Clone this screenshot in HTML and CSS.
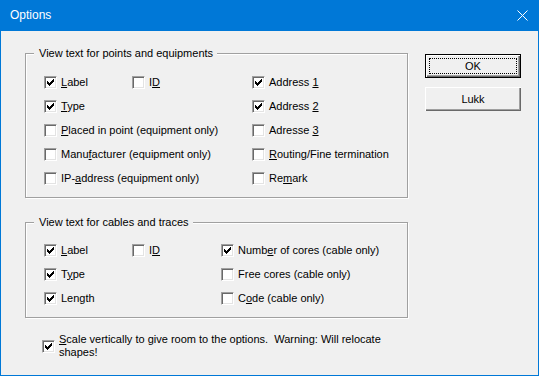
FILE: index.html
```html
<!DOCTYPE html>
<html>
<head>
<meta charset="utf-8">
<link rel="stylesheet" href="styles.css">
</head>
<body>
<div class="window">
  <div class="titlebar">
    <span class="title">Options</span>
    <svg class="close" width="11" height="11" viewBox="0 0 11 11"><path d="M0.5 0.5L10.5 10.5M10.5 0.5L0.5 10.5" stroke="#fff" stroke-width="1" fill="none"/></svg>
  </div>
  <div class="client">
    <div class="main">
      <div class="group g1">
        <span class="legend">View text for points and equipments</span>
        <div class="grid grid1">
          <label class="cb"><span class="box on"><svg viewBox="0 0 13 13" width="13" height="13"><path d="M3 5h1v3h-1zM4 6h1v3h-1zM5 7h1v3h-1zM6 6h1v3h-1zM7 5h1v3h-1zM8 4h1v3h-1zM9 3h1v3h-1z" fill="#000"/></svg></span><span class="txt"><u>L</u>abel</span></label>
          <label class="cb"><span class="box"></span><span class="txt">I<u>D</u></span></label>
          <label class="cb"><span class="box on"><svg viewBox="0 0 13 13" width="13" height="13"><path d="M3 5h1v3h-1zM4 6h1v3h-1zM5 7h1v3h-1zM6 6h1v3h-1zM7 5h1v3h-1zM8 4h1v3h-1zM9 3h1v3h-1z" fill="#000"/></svg></span><span class="txt">Address <u>1</u></span></label>

          <label class="cb"><span class="box on"><svg viewBox="0 0 13 13" width="13" height="13"><path d="M3 5h1v3h-1zM4 6h1v3h-1zM5 7h1v3h-1zM6 6h1v3h-1zM7 5h1v3h-1zM8 4h1v3h-1zM9 3h1v3h-1z" fill="#000"/></svg></span><span class="txt"><u>T</u>ype</span></label>
          <div></div>
          <label class="cb"><span class="box on"><svg viewBox="0 0 13 13" width="13" height="13"><path d="M3 5h1v3h-1zM4 6h1v3h-1zM5 7h1v3h-1zM6 6h1v3h-1zM7 5h1v3h-1zM8 4h1v3h-1zM9 3h1v3h-1z" fill="#000"/></svg></span><span class="txt">Address <u>2</u></span></label>

          <label class="cb span2"><span class="box"></span><span class="txt"><u>P</u>laced in point (equipment only)</span></label>
          <label class="cb"><span class="box"></span><span class="txt">Adresse <u>3</u></span></label>

          <label class="cb span2"><span class="box"></span><span class="txt">Manu<u>f</u>acturer (equipment only)</span></label>
          <label class="cb"><span class="box"></span><span class="txt"><u>R</u>outing/Fine termination</span></label>

          <label class="cb span2"><span class="box"></span><span class="txt">IP-<u>a</u>ddress (equipment only)</span></label>
          <label class="cb"><span class="box"></span><span class="txt">Re<u>m</u>ark</span></label>
        </div>
      </div>

      <div class="group g2">
        <span class="legend">View text for cables and traces</span>
        <div class="grid grid2">
          <label class="cb"><span class="box on"><svg viewBox="0 0 13 13" width="13" height="13"><path d="M3 5h1v3h-1zM4 6h1v3h-1zM5 7h1v3h-1zM6 6h1v3h-1zM7 5h1v3h-1zM8 4h1v3h-1zM9 3h1v3h-1z" fill="#000"/></svg></span><span class="txt"><u>L</u>abel</span></label>
          <label class="cb"><span class="box"></span><span class="txt">I<u>D</u></span></label>
          <label class="cb"><span class="box on"><svg viewBox="0 0 13 13" width="13" height="13"><path d="M3 5h1v3h-1zM4 6h1v3h-1zM5 7h1v3h-1zM6 6h1v3h-1zM7 5h1v3h-1zM8 4h1v3h-1zM9 3h1v3h-1z" fill="#000"/></svg></span><span class="txt">Numb<u>e</u>r of cores (cable only)</span></label>

          <label class="cb"><span class="box on"><svg viewBox="0 0 13 13" width="13" height="13"><path d="M3 5h1v3h-1zM4 6h1v3h-1zM5 7h1v3h-1zM6 6h1v3h-1zM7 5h1v3h-1zM8 4h1v3h-1zM9 3h1v3h-1z" fill="#000"/></svg></span><span class="txt">T<u>y</u>pe</span></label>
          <div></div>
          <label class="cb"><span class="box"></span><span class="txt">Free cores (cable only)</span></label>

          <label class="cb"><span class="box on"><svg viewBox="0 0 13 13" width="13" height="13"><path d="M3 5h1v3h-1zM4 6h1v3h-1zM5 7h1v3h-1zM6 6h1v3h-1zM7 5h1v3h-1zM8 4h1v3h-1zM9 3h1v3h-1z" fill="#000"/></svg></span><span class="txt">Len<u>g</u>th</span></label>
          <div></div>
          <label class="cb"><span class="box"></span><span class="txt">C<u>o</u>de (cable only)</span></label>
        </div>
      </div>

      <label class="cb scale"><span class="box on"><svg viewBox="0 0 13 13" width="13" height="13"><path d="M3 5h1v3h-1zM4 6h1v3h-1zM5 7h1v3h-1zM6 6h1v3h-1zM7 5h1v3h-1zM8 4h1v3h-1zM9 3h1v3h-1z" fill="#000"/></svg></span><span class="txt"><u>S</u>cale vertically to give room to the options.&nbsp; Warning: Will relocate<br>shapes!</span></label>
    </div>

    <div class="buttons">
      <div class="btn default"><span class="focus">OK</span></div>
      <div class="btn">Lukk</div>
    </div>
  </div>
</div>
</body>
</html>
```

FILE: styles.css
```css
* { box-sizing: border-box; }

html, body {
  margin: 0;
  padding: 0;
  background: #f0f0f0;
}

.window {
  width: 539px;
  height: 376px;
  background: #0078d7;
  padding: 0 1px 1px 1px;
  display: flex;
  flex-direction: column;
  font-family: "Liberation Sans", Arial, sans-serif;
  font-size: 11px;
  color: #000;
}

.titlebar {
  height: 31px;
  flex: none;
  display: flex;
  align-items: center;
  justify-content: space-between;
  padding: 0 10px 0 9px;
  color: #fff;
}

.title {
  font-family: "Segoe UI", "Liberation Sans", sans-serif;
  font-size: 12px;
  line-height: 16px;
  margin-top: -1px;
}

.close {
  display: block;
  margin-right: 0;
  margin-top: -1px;
}

.client {
  flex: 1;
  background: #f0f0f0;
  display: flex;
  align-items: flex-start;
  padding: 22px 0 0 24px;
}

.main {
  width: 383px;
  display: flex;
  flex-direction: column;
}

.group {
  position: relative;
  border: 1px solid #a0a0a0;
  box-shadow: inset 1px 1px 0 #fff, 1px 1px 0 #fff;
  padding: 16px 0 7px 18px;
}

.g2 {
  margin-top: 24px;
  padding-top: 15px;
}

.legend {
  position: absolute;
  top: -7px;
  left: 8px;
  line-height: 13px;
  padding: 0 4px 0 5px;
  background: #f0f0f0;
  white-space: nowrap;
}

.grid {
  display: grid;
  grid-auto-rows: 24px;
}

.grid1 { grid-template-columns: 88px 120px 1fr; }
.grid2 { grid-template-columns: 88px 89px 1fr; }

.span2 { grid-column: span 2; }

.cb {
  display: flex;
  align-items: center;
  white-space: nowrap;
}

.box {
  flex: none;
  width: 13px;
  height: 13px;
  background: #fff;
  border-top: 1px solid #a0a0a0;
  border-left: 1px solid #a0a0a0;
  border-right: 1px solid #fff;
  border-bottom: 1px solid #fff;
  box-shadow: inset 1px 1px 0 #696969, inset -1px -1px 0 #e3e3e3;
  position: relative;
}

.box svg {
  position: absolute;
  left: -1px;
  top: -1px;
  display: block;
}

.txt {
  margin-left: 4px;
  line-height: 13px;
}

u {
  text-decoration-thickness: 1px;
  text-underline-offset: 1px;
}

.scale {
  margin-top: 15px;
  margin-left: 17px;
  white-space: normal;
}

.buttons {
  margin-left: 17px;
  margin-top: 1px;
  display: flex;
  flex-direction: column;
  gap: 9px;
}

.btn {
  width: 96px;
  height: 24px;
  display: flex;
  align-items: center;
  justify-content: center;
  background: #f0f0f0;
  box-shadow: inset 1px 1px 0 #fff, inset -1px -1px 0 #696969, inset -2px -2px 0 #a0a0a0;
  line-height: 13px;
}

.btn.default {
  border: 1px solid #000;
  padding: 3px;
}

.focus {
  flex: 1;
  align-self: stretch;
  display: flex;
  align-items: center;
  justify-content: center;
  border: 1px dotted #000;
}
```
